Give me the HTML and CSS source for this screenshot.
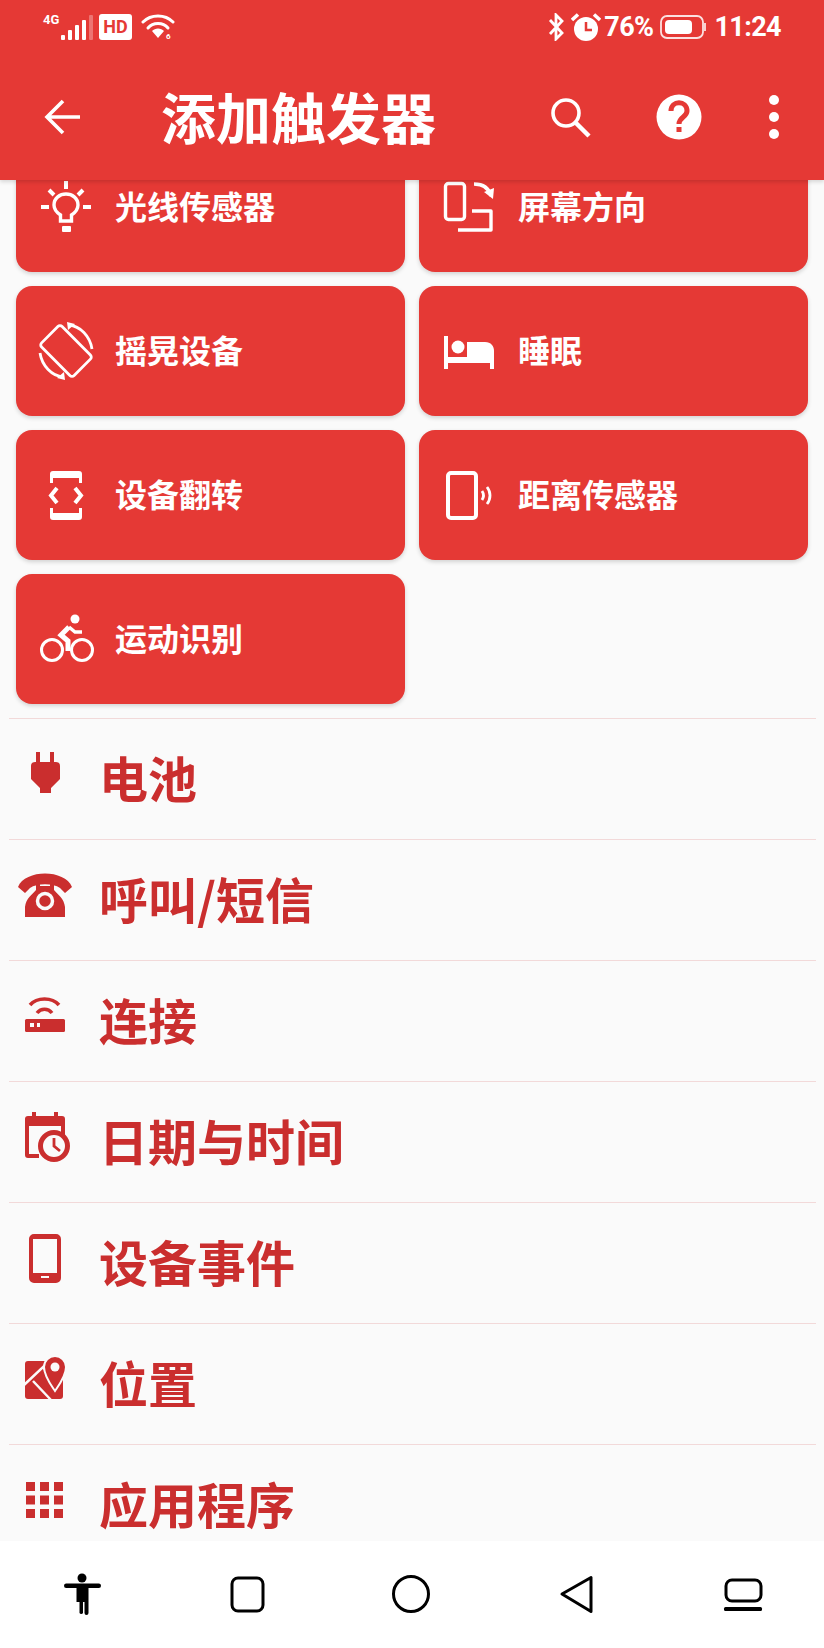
FILE: index.html
```html
<!DOCTYPE html>
<html lang="zh-CN">
<head>
<meta charset="utf-8">
<title>添加触发器</title>
<link rel="stylesheet" href="styles.css">
</head>
<body>
<div class="screen">
  <header class="appbar">
    <div class="status">
      <div class="status-left">
        <span class="net">4G</span>
        <svg class="signal" width="32" height="26" viewBox="0 0 32 26"><rect x="0" y="21" width="4" height="5" rx="1"/><rect x="7" y="16" width="4" height="10" rx="1"/><rect x="14" y="11" width="4" height="15" rx="1"/><rect x="21" y="6" width="4" height="20" rx="1"/><rect x="28" y="1" width="4" height="25" rx="1" opacity=".3"/></svg>
        <span class="hd">HD</span>
        <svg class="wifi" width="34" height="26" viewBox="0 0 34 26"><g fill="none" stroke="currentColor" stroke-width="3" stroke-linecap="round"><path d="M2 8C10 0 24 0 32 8"/><path d="M7 14C12 8 22 8 27 14"/></g><path d="M11 17C14 13.500 20 13.500 23 17L17 24Z" fill="currentColor"/><text x="25" y="25" class="wifi-six">6</text></svg>
      </div>
      <div class="status-right">
        <svg width="17" height="28" viewBox="0 0 17 28"><path d="M2 7L14 20L8 26V2L14 8L2 21" fill="none" stroke="currentColor" stroke-width="2.800"/></svg>
        <svg class="alarm" width="30" height="28" viewBox="0 0 30 28"><circle cx="15" cy="16" r="12" fill="currentColor"/><path d="M15 9V17H21" fill="none" stroke="#e53935" stroke-width="2.500"/><path d="M1 7L7 1.500M29 7L23 1.500" fill="none" stroke="currentColor" stroke-width="3.500"/></svg>
        <span class="pct">76%</span>
        <svg class="batt" width="47" height="24" viewBox="0 0 47 24"><rect x="1" y="1" width="42" height="22" rx="6" fill="none" stroke="currentColor" stroke-width="1.800" opacity=".85"/><rect x="5" y="5" width="27" height="14" rx="4" fill="currentColor"/><path d="M45 8V16" stroke="currentColor" stroke-width="1.800" opacity=".85"/></svg>
        <span class="clock">11:24</span>
      </div>
    </div>
    <div class="toolbar">
      <svg class="tool-back" width="60" height="60" viewBox="0 0 60 60"><path d="M50 30H18M33 14L17 30L33 46" fill="none" stroke="currentColor" stroke-width="3.600"/></svg>
      <h1 class="title">添加触发器</h1>
      <svg class="tool-search" width="60" height="60" viewBox="0 0 60 60"><circle cx="26" cy="26" r="13" fill="none" stroke="currentColor" stroke-width="3.600"/><path d="M36 36L49 49" stroke="currentColor" stroke-width="4.500"/></svg>
      <svg class="tool-help" width="60" height="60" viewBox="0 0 60 60"><circle cx="30" cy="30" r="22.500" fill="currentColor"/><path d="M22 24C22 13 38 13 38 24C38 30 30 30 30 37" fill="none" stroke="#e53935" stroke-width="5"/><rect x="27.500" y="40" width="5" height="5" fill="#e53935"/></svg>
      <svg class="tool-more" width="30" height="60" viewBox="0 0 30 60"><circle cx="15" cy="13" r="5" fill="currentColor"/><circle cx="15" cy="30" r="5" fill="currentColor"/><circle cx="15" cy="47" r="5" fill="currentColor"/></svg>
    </div>
  </header>

  <main class="scroller">
    <section class="cards">
      <div class="card">
        <svg class="icon" viewBox="0 0 60 60"><g fill="none" stroke="currentColor" stroke-width="3.400"><path d="M24.500 44V38C20 35 18 32 18 28C18 21 24 17 30 17C36 17 42 21 42 28C42 32 40 35 35.500 38V44Z"/><path d="M30 4V12M5 30H13M47 30H55M13 13L18 18M47 13L42 18" stroke-width="4"/></g><rect x="26" y="49" width="9" height="6" rx="1" fill="currentColor"/></svg>
        <span class="card-label">光线传感器</span>
      </div>
      <div class="card">
        <svg class="icon" viewBox="0 0 60 60"><g fill="none" stroke="currentColor" stroke-width="3.400"><rect x="6.500" y="6.500" width="19" height="36" rx="3"/><path d="M33 34H52V53H19" stroke-linejoin="round"/><path d="M35 7C44 7 50 11 52 19"/></g><path d="M45 15L54 22L55 11Z" fill="currentColor"/></svg>
        <span class="card-label">屏幕方向</span>
      </div>
      <div class="card">
        <svg class="icon" viewBox="0 0 60 60"><g fill="none" stroke="currentColor" stroke-width="2.800"><rect x="15.500" y="7" width="29" height="46" rx="3" transform="rotate(-45 30 30)"/><path d="M33 4C44 5 54 15 56 28"/><path d="M27 56C16 55 6 45 4 32"/></g><path d="M31 1L39 3L32 9ZM29 59L21 57L28 51Z" fill="currentColor"/></svg>
        <span class="card-label">摇晃设备</span>
      </div>
      <div class="card">
        <svg class="icon" viewBox="0 0 60 60"><g fill="currentColor"><rect x="5" y="15" width="4" height="33"/><rect x="5" y="36" width="50" height="6"/><rect x="51" y="36" width="4" height="12"/><circle cx="19" cy="26" r="6.500"/><path d="M28 21H46C52 21 55 25 55 30V37H28Z"/></g></svg>
        <span class="card-label">睡眠</span>
      </div>
      <div class="card">
        <svg class="icon" viewBox="0 0 60 60"><path d="M14 18V9A3 3 0 0 1 17 6H43A3 3 0 0 1 46 9V18H43V13H17V18ZM14 43V52A3 3 0 0 0 17 55H43A3 3 0 0 0 46 52V43H43V48H17V43Z" fill="currentColor"/><path d="M21 23L15 30.500L21 38M39 23L45 30.500L39 38" fill="none" stroke="currentColor" stroke-width="4"/></svg>
        <span class="card-label">设备翻转</span>
      </div>
      <div class="card">
        <svg class="icon" viewBox="0 0 60 60"><rect x="9" y="8" width="28" height="45" rx="3" fill="none" stroke="currentColor" stroke-width="4"/><path d="M43 26C45 29 45 32 43 35M48 22C52 27 52 34 48 39" fill="none" stroke="currentColor" stroke-width="2.800"/></svg>
        <span class="card-label">距离传感器</span>
      </div>
      <div class="card">
        <svg class="icon" viewBox="0 0 60 60"><circle cx="39" cy="10" r="4.500" fill="currentColor"/><circle cx="16" cy="41" r="10.500" fill="none" stroke="currentColor" stroke-width="3"/><circle cx="46" cy="41" r="10.500" fill="none" stroke="currentColor" stroke-width="3"/><path d="M33 18L25 26L32 32V42" fill="none" stroke="currentColor" stroke-width="5"/><path d="M33 18L39 23H46" fill="none" stroke="currentColor" stroke-width="3.400"/></svg>
        <span class="card-label">运动识别</span>
      </div>
    </section>

    <section class="list">
      <div class="row">
        <svg class="row-icon" viewBox="0 0 60 60"><path d="M21 8H25V18H35V8H39V18H41Q45 18 45 22V35L36 44V49H25V44L16 35V22Q16 18 20 18H21Z" fill="currentColor"/></svg>
        <span class="row-label">电池</span>
      </div>
      <div class="row">
        <svg class="row-icon" viewBox="0 0 60 60"><path d="M10 52V42C11 33 17 30 21 25V17H25V21H35V17H39V25C43 30 49 33 50 42V52Z" fill="currentColor"/><circle cx="30" cy="36" r="7.500" fill="none" stroke="#fafafa" stroke-width="3.500"/><path d="M3 22C10 4 50 4 57 22L50 28L45 23C38 18 22 18 15 23L10 28Z" fill="currentColor"/></svg>
        <span class="row-label">呼叫/短信</span>
      </div>
      <div class="row">
        <svg class="row-icon" viewBox="0 0 60 60"><rect x="10" y="33" width="40" height="13" rx="1.500" fill="currentColor"/><rect x="15" y="37" width="4" height="4" fill="#fafafa"/><rect x="22" y="37" width="3" height="4" fill="#fafafa"/><path d="M15 19C22 11 37 11 44 19M22 27C26 22 33 22 37 27" fill="none" stroke="currentColor" stroke-width="3.600"/></svg>
        <span class="row-label">连接</span>
      </div>
      <div class="row">
        <svg class="row-icon" viewBox="0 0 60 60"><path d="M17 5H21V9H39V5H43V9H47A3 3 0 0 1 50 12V30H46V19H14V47H24V51H13A3 3 0 0 1 10 48V12A3 3 0 0 1 13 9H17Z" fill="currentColor"/><circle cx="39" cy="39" r="13.500" fill="#fafafa" stroke="currentColor" stroke-width="5"/><path d="M39 31V39L45 44" fill="none" stroke="currentColor" stroke-width="2.800"/></svg>
        <span class="row-label">日期与时间</span>
      </div>
      <div class="row">
        <svg class="row-icon" viewBox="0 0 60 60"><path d="M19 6H41A5 5 0 0 1 46 11V50A5 5 0 0 1 41 55H19A5 5 0 0 1 14 50V11A5 5 0 0 1 19 6ZM18 11V45H42V11ZM26 48V50H34V48Z" fill="currentColor" fill-rule="evenodd"/></svg>
        <span class="row-label">设备事件</span>
      </div>
      <div class="row">
        <svg class="row-icon" viewBox="0 0 60 60"><rect x="10" y="12" width="38" height="38" rx="3" fill="currentColor"/><path d="M9 36L28 18L41 35M18 32L36 51" fill="none" stroke="#fafafa" stroke-width="2.500"/><path d="M40 42C36 36 29 27 29 18A11 11 0 0 1 51 18C51 27 44 36 40 42Z" fill="currentColor" stroke="#fafafa" stroke-width="2"/><circle cx="40" cy="18" r="4.500" fill="#fafafa"/></svg>
        <span class="row-label">位置</span>
      </div>
      <div class="row">
        <svg class="row-icon" viewBox="0 0 60 60"><g fill="currentColor"><rect x="11" y="12" width="9" height="9"/><rect x="25" y="12" width="9" height="9"/><rect x="39" y="12" width="9" height="9"/><rect x="11" y="25.500" width="9" height="9"/><rect x="25" y="25.500" width="9" height="9"/><rect x="39" y="25.500" width="9" height="9"/><rect x="11" y="39" width="9" height="9"/><rect x="25" y="39" width="9" height="9"/><rect x="39" y="39" width="9" height="9"/></g></svg>
        <span class="row-label">应用程序</span>
      </div>
    </section>
  </main>

  <nav class="navbar">
    <svg class="nav-icon" viewBox="0 0 60 60"><g fill="#000"><circle cx="30" cy="14" r="4.500"/><rect x="12" y="19.500" width="37" height="4.500" rx="2.200"/><path d="M24 22H36V49A2 2 0 0 1 32 49V38H30.500V49A2 2 0 0 1 27 49V38H28V38H24Z" transform="translate(.5 0)"/></g></svg>
    <svg class="nav-icon nudge-1" viewBox="0 0 60 60"><rect x="15" y="14" width="31" height="33" rx="6" fill="none" stroke="#000" stroke-width="3"/></svg>
    <svg class="nav-icon nudge-1" viewBox="0 0 60 60"><circle cx="30" cy="30" r="17.500" fill="none" stroke="#000" stroke-width="3"/></svg>
    <svg class="nav-icon" viewBox="0 0 60 60"><path d="M44 13.500V47.500L15 30Z" fill="none" stroke="#000" stroke-width="3" stroke-linejoin="round"/></svg>
    <svg class="nav-icon" viewBox="0 0 60 60"><rect x="14" y="16" width="35" height="21" rx="6" fill="none" stroke="#000" stroke-width="3"/><rect x="12" y="43" width="38" height="4" rx="1.500" fill="#000"/></svg>
  </nav>
</div>
</body>
</html>
```

FILE: styles.css
```css
* { box-sizing: border-box; }
html, body { margin: 0; padding: 0; }
body { background: #fafafa; font-family: "Noto Sans CJK SC", "Noto Sans", sans-serif; }
.screen { width: 824px; height: 1648px; display: flex; flex-direction: column; overflow: hidden; }

.appbar { height: 180px; flex: none; background: #e53935; color: #fff; box-shadow: 0 2px 4px rgba(0,0,0,.14); position: relative; z-index: 2; }
.status { height: 54px; display: flex; justify-content: space-between; align-items: center; padding: 0 43px 0 43px; }
.status-left, .status-right { display: flex; align-items: center; }
.net { font: 700 13px/1 "Roboto", sans-serif; margin-bottom: 15px; width: 18px; }
.signal { fill: #fff; }
.hd { width: 33px; height: 26px; margin-left: 6px; border-radius: 3px; background: #fff; color: #e53935; font: 700 18px/26px "Roboto", sans-serif; text-align: center; }
.wifi { margin-left: 9px; }
.wifi-six { font: 700 8px "Roboto", sans-serif; fill: #fff; }
.alarm { margin-left: 6px; }
.pct { font: 700 27px/1 "Roboto", sans-serif; margin-left: 3px; letter-spacing: -.6px; }
.batt { margin-left: 7px; }
.clock { font: 700 27px/1 "Roboto", sans-serif; margin-left: 7px; letter-spacing: -.6px; }

.toolbar { height: 126px; display: flex; align-items: center; padding-left: 30px; }
.title { margin: 0 0 0 71px; padding-bottom: 4px; font-size: 55px; font-weight: 700; line-height: 1; flex: 1; }
.tool-search { margin-right: 49px; margin-top: -1px; }
.tool-help { margin-right: 50px; }
.tool-more { margin-right: 35px; }

.scroller { flex: 1; min-height: 0; overflow: hidden; }
.cards { display: grid; grid-template-columns: 389px 389px; gap: 14px; margin-top: -38px; padding: 0 16px 14px; }
.card { height: 130px; background: #e53935; color: #fff; border-radius: 16px; box-shadow: 0 2px 4px rgba(0,0,0,.16); display: flex; align-items: center; padding-left: 20px; gap: 19px; }
.icon { width: 60px; height: 60px; flex: none; }
.card-label { padding-bottom: 4px; font-size: 32px; font-weight: 700; line-height: 1; }

.list { margin: 0 8px 0 9px; color: #ca2e2e; }
.row { height: 121px; border-top: 1px solid #f2d9d9; display: flex; align-items: center; padding-left: 6px; gap: 24px; }
.row-icon { width: 60px; height: 60px; flex: none; margin-bottom: 10px; }
.row-label { padding-bottom: 5px; font-size: 49px; font-weight: 700; line-height: 1; }

.navbar { height: 107px; flex: none; background: #fff; display: grid; grid-template-columns: repeat(5, 1fr); align-items: center; justify-items: center; padding-bottom: 2px; }
.nav-icon { width: 60px; height: 60px; }
.nudge-1 { margin-right: 1px; }
```
